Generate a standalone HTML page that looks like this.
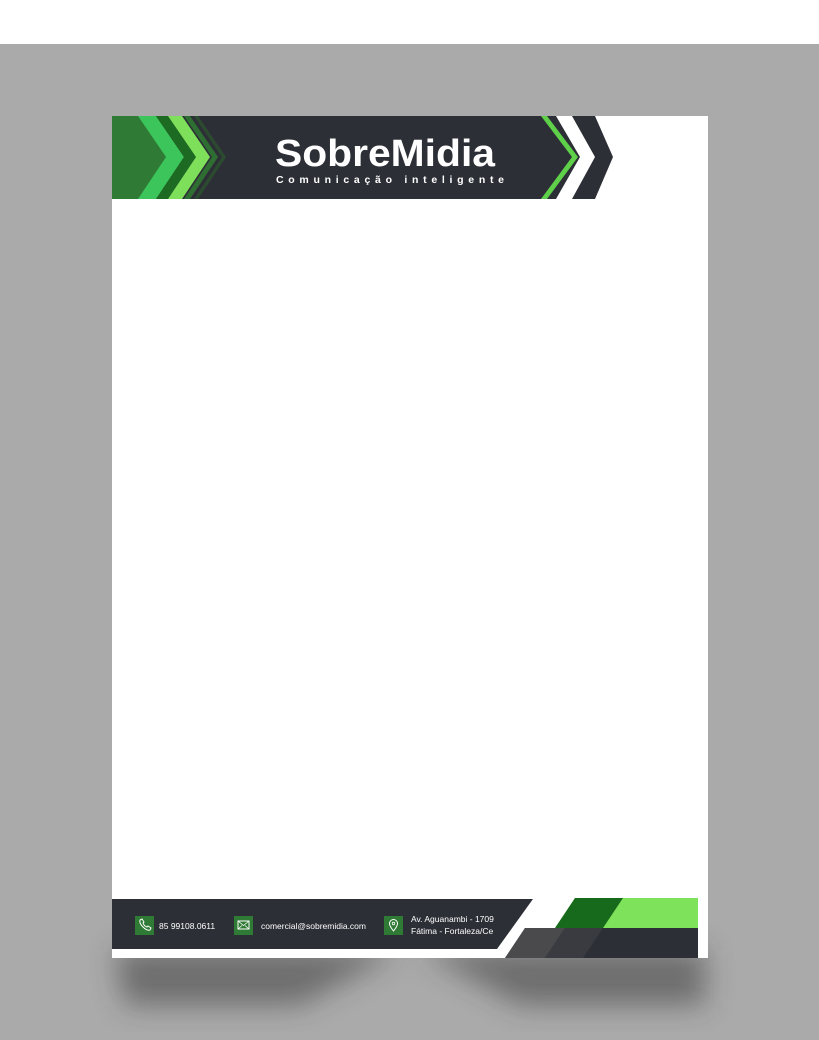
<!DOCTYPE html>
<html><head><meta charset="utf-8"><style>
body{margin:0;width:819px;height:1040px;background:#fff;position:relative;overflow:hidden;font-family:"Liberation Sans",sans-serif}
.bg{position:absolute;left:0;top:44px;width:819px;height:996px;background:#aaaaaa}
svg{position:absolute;left:0;top:0}
</style></head><body>
<div class="bg"></div>
<svg width="819" height="1040">
<defs>
<filter id="bl" x="-20%" y="-50%" width="140%" height="200%"><feGaussianBlur stdDeviation="14"/></filter>
</defs>
<g filter="url(#bl)" opacity="0.5">
<polygon points="115,950 400,950 300,1005 125,1005" fill="#333"/>
<polygon points="420,950 705,950 705,1005 520,1005" fill="#333"/>
</g>
<rect x="112" y="116" width="596" height="842" fill="#fff"/>
<!-- header -->
<polygon points="112,116 595,116 613,157 595,199 112,199" fill="#2d2f36"/>
<polygon points="112,116 150,116 170,157 150,199 112,199" fill="#2f7a35"/>
<polygon points="138,116 156,116 184,157 156,199 138,199 166,157" fill="#3cc55a"/>
<polygon points="156,116 168,116 196,157 168,199 156,199 184,157" fill="#1d6b22"/>
<polygon points="168,116 182,116 210,157 182,199 168,199 196,157" fill="#7ee05a"/>
<polygon points="184,116 190,116 218,157 190,199 184,199 212,157" fill="#2f6e32"/>
<polygon points="194,116 198,116 226,157 198,199 194,199 222,157" fill="#2b4a30"/>
<polygon points="541,116 547,116 578,157 547,199 541,199 572,157" fill="#5fd04a"/>
<polygon points="556,116 572,116 595,157 572,199 556,199 580,157" fill="#fff"/>
<text x="275" y="166" fill="#fff" font-size="38" font-weight="bold" font-family="Liberation Sans,sans-serif" textLength="220" lengthAdjust="spacingAndGlyphs">SobreMidia</text>
<text x="276" y="183" fill="#fff" font-size="10.5" font-weight="bold" textLength="228" lengthAdjust="spacing">Comunicação inteligente</text>
<!-- footer -->
<polygon points="112,899 533,899 497,949 112,949" fill="#2d2f36"/>
<polygon points="575,898 698,898 698,928 555,928" fill="#7ee35a"/>
<polygon points="575,898 623,898 603,928 555,928" fill="#17691c"/>
<polygon points="525,928 698,928 698,958 505,958" fill="#2d2f36"/>
<polygon points="525,928 565,928 545,958 505,958" fill="#4a4a4c"/>
<polygon points="565,928 603,928 583,958 545,958" fill="#3a3b40"/>
<rect x="135" y="916" width="19" height="19" fill="#2f7a35"/>
<path d="M140 920 q-1 3 3 7 q4 4 7 3 l1-2 -3-2 -1 1 q-3-1 -4-4 l1-1 -2-3z" fill="none" stroke="#fff" stroke-width="1"/>
<text x="159" y="929" fill="#fff" font-size="8.5">85 99108.0611</text>
<rect x="234" y="916" width="19" height="19" fill="#2f7a35"/>
<rect x="238" y="921" width="11" height="8" fill="none" stroke="#fff" stroke-width="1"/>
<path d="M238 921 l5.5 4.5 5.5-4.5 M238 929 l4-3.5 M249 929 l-4-3.5" fill="none" stroke="#fff" stroke-width="0.8"/>
<text x="261" y="929" fill="#fff" font-size="8.5">comercial@sobremidia.com</text>
<rect x="384" y="916" width="19" height="19" fill="#2f7a35"/>
<path d="M393.5 931 q-4-5 -4-7.5 a4 4 0 0 1 8 0 q0 2.5 -4 7.5z" fill="none" stroke="#fff" stroke-width="1"/>
<circle cx="393.5" cy="923.5" r="1.3" fill="none" stroke="#fff" stroke-width="0.8"/>
<text x="411" y="922" fill="#fff" font-size="8.5">Av. Aguanambi - 1709</text>
<text x="411" y="934" fill="#fff" font-size="8.5">Fátima - Fortaleza/Ce</text>
</svg>
</body></html>
